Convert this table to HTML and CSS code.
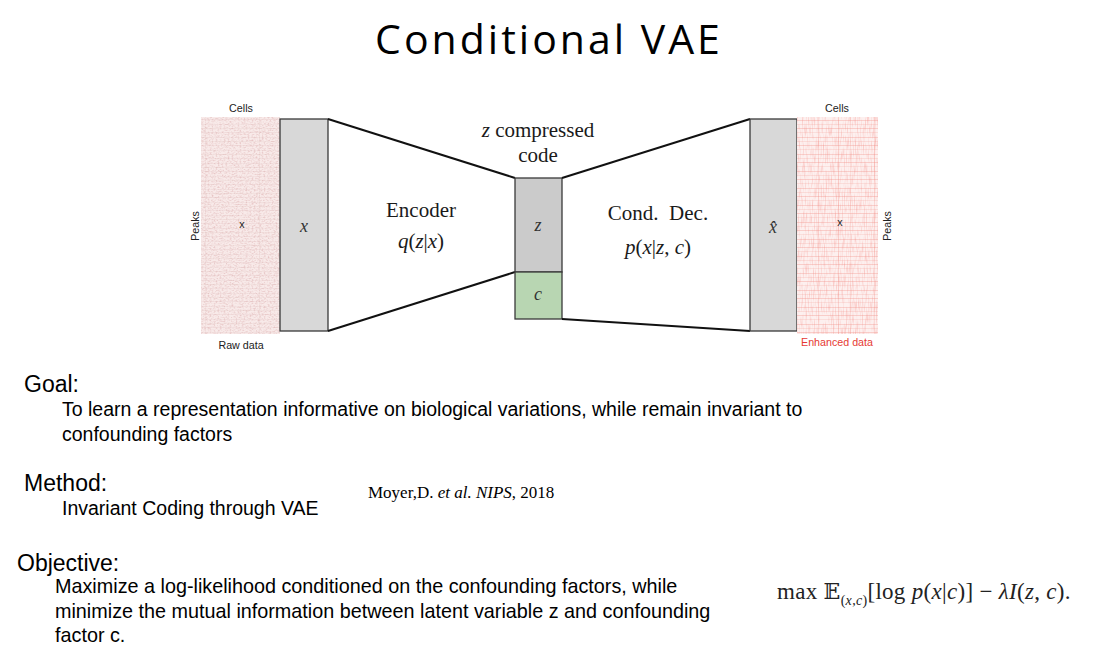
FILE: index.html
```html
<!DOCTYPE html>
<html>
<head>
<meta charset="utf-8">
<title>Conditional VAE</title>
<link rel="stylesheet" href="styles.css">
</head>
<body>
<header class="title">Conditional VAE</header>

<div class="diagram">
<svg class="fig" width="720" height="262" viewBox="185 95 720 262" xmlns="http://www.w3.org/2000/svg">
  <defs>
    <filter id="noiseL" x="0" y="0" width="1" height="1">
      <feTurbulence type="fractalNoise" baseFrequency="0.5 0.7" numOctaves="2" seed="4"/>
      <feColorMatrix type="matrix" values="0 0 0 0 0.80  0 0 0 0 0.56  0 0 0 0 0.56  2.3 0 0 0 -1.0"/>
    </filter>
    <filter id="noiseR" x="0" y="0" width="1" height="1">
      <feTurbulence type="fractalNoise" baseFrequency="0.9 0.08" numOctaves="2" seed="9"/>
      <feColorMatrix type="matrix" values="0 0 0 0 0.95  0 0 0 0 0.52  0 0 0 0 0.50  2.0 0 0 0 -0.9"/>
    </filter>
    <pattern id="rowsL" width="79" height="13" patternUnits="userSpaceOnUse">
      <rect x="0" y="2" width="79" height="1" fill="#d2a9a7" opacity="0.16"/>
      <rect x="0" y="7" width="79" height="1" fill="#d2a9a7" opacity="0.12"/>
      <rect x="0" y="11" width="79" height="1" fill="#d2a9a7" opacity="0.14"/>
      <rect x="22" y="0" width="1" height="13" fill="#d2a9a7" opacity="0.14"/>
      <rect x="47" y="0" width="1" height="13" fill="#d2a9a7" opacity="0.12"/>
    </pattern>
    <pattern id="rowsR" width="81" height="17" patternUnits="userSpaceOnUse">
      <rect x="0" y="1" width="81" height="1" fill="#f08a80" opacity="0.32"/>
      <rect x="0" y="5" width="81" height="1" fill="#f08a80" opacity="0.2"/>
      <rect x="0" y="9" width="81" height="1" fill="#f08a80" opacity="0.34"/>
      <rect x="0" y="13" width="81" height="1" fill="#f08a80" opacity="0.18"/>
      <rect x="8" y="0" width="1" height="17" fill="#f08a80" opacity="0.22"/>
      <rect x="28" y="0" width="1" height="17" fill="#f08a80" opacity="0.3"/>
      <rect x="40" y="0" width="1" height="17" fill="#f08a80" opacity="0.18"/>
      <rect x="64" y="0" width="1" height="17" fill="#f08a80" opacity="0.22"/>
    </pattern>
  </defs>

  <!-- left heatmap -->
  <rect x="201" y="117" width="79" height="217" fill="#f8eae9"/>
  <rect x="201" y="117" width="79" height="217" filter="url(#noiseL)"/>
  <rect x="201" y="117" width="79" height="217" fill="url(#rowsL)"/>
  <text class="small" x="241" y="112" text-anchor="middle">Cells</text>
  <text class="small" transform="translate(199,226) rotate(-90)" text-anchor="middle">Peaks</text>
  <text class="small" x="242" y="228" text-anchor="middle">x</text>
  <text class="small" x="241" y="349" text-anchor="middle">Raw data</text>

  <!-- x box -->
  <rect x="280" y="119" width="48" height="212" fill="#d8d8d8" stroke="#3a3a3a" stroke-width="1.3"/>
  <text class="math" x="304" y="232" text-anchor="middle">x</text>

  <!-- encoder -->
  <line x1="328" y1="119" x2="515" y2="178" stroke="#111" stroke-width="2"/>
  <line x1="328" y1="331" x2="515" y2="272" stroke="#111" stroke-width="2"/>
  <text class="serif" x="421" y="217" text-anchor="middle">Encoder</text>
  <text class="serif" x="421" y="248" text-anchor="middle"><tspan class="it">q</tspan>(<tspan class="it">z</tspan>|<tspan class="it">x</tspan>)</text>

  <!-- latent -->
  <text class="serif" x="538" y="137" text-anchor="middle"><tspan class="it">z</tspan> compressed</text>
  <text class="serif" x="538" y="162" text-anchor="middle">code</text>
  <rect x="515" y="178" width="47" height="94" fill="#cbcbcb" stroke="#3a3a3a" stroke-width="1.3"/>
  <rect x="515" y="272" width="47" height="47" fill="#b8d6b2" stroke="#3a3a3a" stroke-width="1.3"/>
  <text class="math" x="538" y="231" text-anchor="middle">z</text>
  <text class="math" x="538" y="300" text-anchor="middle">c</text>

  <!-- decoder -->
  <line x1="562" y1="178" x2="750" y2="119" stroke="#111" stroke-width="2"/>
  <line x1="562" y1="319" x2="750" y2="331" stroke="#111" stroke-width="2"/>
  <text class="serif" x="658" y="220" text-anchor="middle">Cond.&#160;&#160;Dec.</text>
  <text class="serif" x="658" y="254" text-anchor="middle"><tspan class="it">p</tspan>(<tspan class="it">x</tspan>|<tspan class="it">z</tspan>, <tspan class="it">c</tspan>)</text>

  <!-- x hat box -->
  <rect x="750" y="119" width="47" height="212" fill="#d8d8d8" stroke="#3a3a3a" stroke-width="1.3"/>
  <text class="math" x="773" y="233" text-anchor="middle">x&#770;</text>

  <!-- right heatmap -->
  <rect x="797" y="117" width="81" height="217" fill="#fdf0ef"/>
  <rect x="797" y="117" width="81" height="217" filter="url(#noiseR)"/>
  <rect x="797" y="117" width="81" height="217" fill="url(#rowsR)"/>
  <text class="small" x="837" y="112" text-anchor="middle">Cells</text>
  <text class="small" x="840" y="226" text-anchor="middle">x</text>
  <text class="small" transform="translate(891,226) rotate(-90)" text-anchor="middle">Peaks</text>
  <text class="small red" x="837" y="346" text-anchor="middle">Enhanced data</text>
</svg>
</div>

<section class="block goal">
  <div class="label">Goal:</div>
  <div class="body">To learn a representation informative on biological variations, while remain invariant to<br>confounding factors</div>
</section>

<section class="block method">
  <div class="col">
    <div class="label">Method:</div>
    <div class="body">Invariant Coding through VAE</div>
  </div>
  <div class="cite">Moyer,D. <i>et al. NIPS</i>, 2018</div>
</section>

<section class="block objective">
  <div class="col">
    <div class="label">Objective:</div>
    <div class="body obj">Maximize a log-likelihood conditioned on the confounding factors, while<br>minimize the mutual information between latent variable z and confounding<br>factor c.</div>
  </div>
  <div class="formula">max <span class="bb">𝔼</span><sub>(<i>x</i>,<i>c</i>)</sub>[log <i>p</i>(<i>x</i>|<i>c</i>)] − <i>λI</i>(<i>z</i>, <i>c</i>).</div>
</section>
</body>
</html>
```

FILE: styles.css
```css
html, body {
  margin: 0;
  padding: 0;
  background: #ffffff;
  color: #000000;
  width: 1110px;
  height: 663px;
  overflow: hidden;
}

body {
  font-family: "Liberation Sans", Arial, sans-serif;
}

.title {
  height: 95px;
  box-sizing: border-box;
  padding: 13px 12px 0 0;
  text-align: center;
  font-family: "Open Sans", Lato, sans-serif;
  font-size: 41px;
  letter-spacing: 3px;
  line-height: 50px;
  color: #000;
}

.diagram {
  height: 262px;
  padding-left: 185px;
}

.fig {
  display: block;
}

.fig .small {
  font-family: "Liberation Sans", Arial, sans-serif;
  font-size: 10.7px;
  fill: #222;
}

.fig .red {
  fill: #e63a33;
}

.fig .serif {
  font-family: "Liberation Serif", "Times New Roman", serif;
  font-size: 21px;
  fill: #1a1a1a;
}

.fig .math {
  font-family: "Liberation Serif", "Times New Roman", serif;
  font-style: italic;
  font-size: 18px;
  fill: #333;
}

.fig .it {
  font-style: italic;
}

.block .label {
  font-size: 23px;
  line-height: 25px;
}

.block .body {
  font-size: 19.5px;
  line-height: 25px;
  white-space: nowrap;
}

.goal {
  margin-top: 15px;
  padding-left: 24px;
}

.goal .body {
  padding-left: 38px;
}

.method {
  margin-top: 24px;
  padding-left: 24px;
  display: flex;
  align-items: center;
}

.method .col {
  width: 344px;
}

.method .body {
  padding-left: 38px;
}

.cite {
  font-family: "Liberation Serif", "Times New Roman", serif;
  font-size: 17px;
  padding-bottom: 6px;
}

.objective {
  margin-top: 31px;
  padding-left: 17px;
  display: flex;
  align-items: flex-start;
}

.objective .col {
  width: 760px;
}

.objective .label {
  line-height: 22px;
}

.objective .body {
  padding-left: 38px;
}

.block .obj {
  font-size: 19.8px;
  line-height: 24.5px;
}

.formula {
  margin-top: 27px;
  font-family: "Liberation Serif", "Times New Roman", serif;
  font-size: 23px;
  letter-spacing: 0.3px;
  white-space: nowrap;
  color: #222;
}

.formula sub {
  font-size: 14px;
}

.formula .bb {
  font-family: "DejaVu Serif", "DejaVu Sans", serif;
  font-size: 22px;
}
```
